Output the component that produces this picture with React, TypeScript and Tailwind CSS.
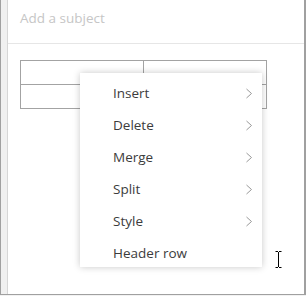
import { ReactNode } from 'react';

const items: { label: string; sub: boolean }[] = [
  { label: 'Insert', sub: true },
  { label: 'Delete', sub: true },
  { label: 'Merge', sub: true },
  { label: 'Split', sub: true },
  { label: 'Style', sub: true },
  { label: 'Header row', sub: false },
];

function Chevron() {
  return (
    <svg width="8" height="11" viewBox="0 0 8 11" className="shrink-0">
      <polyline points="1.5,1 6.5,5.5 1.5,10" fill="none" stroke="#999999" strokeWidth="1" />
    </svg>
  );
}

function MenuItem({ children, sub }: { children: ReactNode; sub: boolean }) {
  return (
    <div className="flex h-8 items-center justify-between pl-[33px] pr-[9px] text-[13.5px] text-[#3c3c3c]">
      <span>{children}</span>
      {sub && <Chevron />}
    </div>
  );
}

export default function App() {
  return (
    <div
      className="relative flex h-[296px] w-[306px] flex-col bg-[#f2f2f2]"
      style={{ fontFamily: '"Open Sans", "Noto Sans", sans-serif' }}
    >
      <div className="flex h-[295px] border-b border-l border-[#a0a0a0]">
        <div className="w-[6px] bg-[#f0f0f0]" />
        <div className="flex flex-1 flex-col border-l border-r-2 border-l-[#d6d6d6] border-r-[#a0a0a0] bg-white">
          <div className="h-[44px] border-b border-[#e6e6e6] px-3 pt-[8px] text-[13.5px] leading-5 text-[#c6c6c6]">
            Add a subject
          </div>
          <div className="ml-3 mt-4 grid h-[49px] w-[247px] grid-cols-[123px_1fr] grid-rows-2 border border-[#a3a3a3]">
            <div className="border-b border-r border-[#a3a3a3]" />
            <div className="border-b border-[#a3a3a3]" />
            <div className="border-r border-[#a3a3a3]" />
            <div />
          </div>
          <div className="flex flex-1 items-end justify-end pb-[26px] pr-[22px]">
            <svg width="7" height="17" viewBox="0 0 7 17">
              <path d="M0.5 0.5h2.5M4 0.5h2.5M3.5 1v15M0.5 16.5h2.5M4 16.5h2.5" stroke="#000" strokeWidth="1" fill="none" />
            </svg>
          </div>
        </div>
      </div>

      <div className="absolute left-[80px] top-[73px] h-[194px] w-[182px] overflow-hidden bg-white pt-1 shadow-[0_0_7px_rgba(0,0,0,0.22)]">
        {items.map((it) => (
          <MenuItem key={it.label} sub={it.sub}>
            {it.label}
          </MenuItem>
        ))}
      </div>
    </div>
  );
}
